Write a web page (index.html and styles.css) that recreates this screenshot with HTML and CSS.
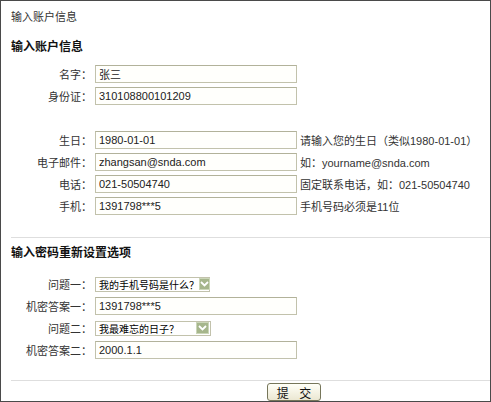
FILE: index.html
```html
<!DOCTYPE html>
<html lang="zh-CN">
<head>
<meta charset="utf-8">
<title>输入账户信息</title>
<link rel="stylesheet" href="styles.css">
</head>
<body>
<div class="frame">
  <div class="page-title">输入账户信息</div>
  <h2 class="section-head">输入账户信息</h2>
  <div class="form">
    <div class="row"><label class="lbl">名字：</label><input class="field" value="张三"></div>
    <div class="row"><label class="lbl">身份证：</label><input class="field" value="310108800101209"></div>
    <div class="row"></div>
    <div class="row"><label class="lbl">生日：</label><input class="field" value="1980-01-01"><span class="hint">请输入您的生日（类似1980-01-01）</span></div>
    <div class="row"><label class="lbl">电子邮件：</label><input class="field" value="zhangsan@snda.com"><span class="hint">如：yourname@snda.com</span></div>
    <div class="row"><label class="lbl">电话：</label><input class="field" value="021-50504740"><span class="hint">固定联系电话，如：021-50504740</span></div>
    <div class="row"><label class="lbl">手机：</label><input class="field" value="1391798***5"><span class="hint">手机号码必须是11位</span></div>
  </div>
  <div class="rule rule-top"></div>
  <h2 class="section-head second">输入密码重新设置选项</h2>
  <div class="form">
    <div class="row"><label class="lbl">问题一：</label>
      <div class="select sel1"><span class="sel-text">我的手机号码是什么？</span><span class="sel-btn"><svg width="9" height="6" viewBox="0 0 9 6"><path d="M1 1 L4.5 4.5 L8 1" fill="none" stroke="#fff" stroke-width="1.8"/></svg></span></div>
    </div>
    <div class="row"><label class="lbl">机密答案一：</label><input class="field" value="1391798***5"></div>
    <div class="row"><label class="lbl">问题二：</label>
      <div class="select sel2"><span class="sel-text">我最难忘的日子？</span><span class="sel-btn"><svg width="9" height="6" viewBox="0 0 9 6"><path d="M1 1 L4.5 4.5 L8 1" fill="none" stroke="#fff" stroke-width="1.8"/></svg></span></div>
    </div>
    <div class="row"><label class="lbl">机密答案二：</label><input class="field" value="2000.1.1"></div>
  </div>
  <div class="rule rule-bottom"></div>
  <div class="actions"><button class="submit" type="button">提 交</button></div>
</div>
</body>
</html>
```
FILE: styles.css
```css
html, body {
  margin: 0;
  padding: 0;
  background: #fff;
}
body {
  font-family: "Liberation Sans", "Noto Sans CJK SC", sans-serif;
  font-size: 11px;
  color: #333;
}
.frame {
  box-sizing: border-box;
  width: 491px;
  height: 402px;
  border: 1px solid #4a4a4a;
  padding-left: 10px;
  overflow: hidden;
}
.page-title {
  height: 33px;
  line-height: 33px;
  color: #333;
}
.section-head {
  margin: 0;
  height: 26px;
  line-height: 26px;
  font-size: 12px;
  font-weight: bold;
  color: #111;
}
.section-head.second {
  padding-top: 2px;
  height: 30px;
}
.form {
  margin-top: 3px;
}
.row {
  display: flex;
  align-items: center;
  height: 22px;
}
.lbl {
  box-sizing: border-box;
  width: 84px;
  padding-right: 3px;
  text-align: right;
  color: #333;
  flex: none;
}
.field {
  box-sizing: border-box;
  width: 202px;
  height: 18px;
  margin: 0;
  padding: 0 0 0 3px;
  border: 1px solid #c2c2ac;
  border-top-color: #b2b29a;
  background: #fffffc;
  font-family: "Liberation Sans", "Noto Sans CJK SC", sans-serif;
  font-size: 11px;
  color: #222;
  outline: none;
}
.hint {
  margin-left: 3px;
  color: #333;
  white-space: nowrap;
}
.select {
  box-sizing: border-box;
  height: 15px;
  border: 1px solid #c2c2ac;
  background: #fff;
  display: flex;
  align-items: center;
  justify-content: space-between;
  padding-left: 3px;
  padding-right: 1px;
}
.sel1 { width: 115px; }
.sel2 { width: 116px; }
.sel-text {
  font-size: 10px;
  color: #000;
  white-space: nowrap;
}
.sel-btn {
  width: 13px;
  height: 12px;
  background: #a6b68c;
  border: 1px solid #cbd6b8;
  box-sizing: border-box;
  display: flex;
  align-items: center;
  justify-content: center;
}
.rule {
  height: 1px;
  background: #dedede;
}
.rule-top {
  margin-top: 20px;
}
.rule-bottom {
  margin-top: 19px;
}
.actions {
  padding-top: 2px;
  padding-left: 256px;
}
.submit {
  box-sizing: border-box;
  width: 54px;
  height: 18px;
  padding: 0;
  border: 1px solid #76765a;
  border-radius: 3px;
  background: linear-gradient(#fffff8, #ebe7d2);
  font-family: "Noto Sans CJK SC", sans-serif;
  font-size: 12px;
  line-height: 15px;
  letter-spacing: 4px;
  color: #111;
  text-indent: 4px;
}
```
